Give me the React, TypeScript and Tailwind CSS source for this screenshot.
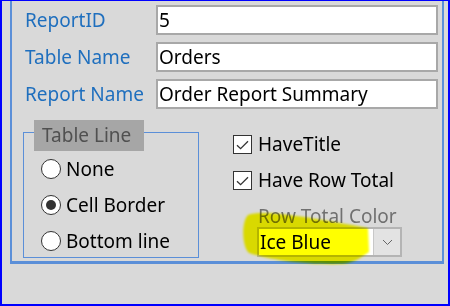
import React from 'react'

const fields = [
  { label: 'ReportID', value: '5' },
  { label: 'Table Name', value: 'Orders' },
  { label: 'Report Name', value: 'Order Report Summary' },
]

const radios = [
  { label: 'None', checked: false },
  { label: 'Cell Border', checked: true },
  { label: 'Bottom line', checked: false },
]

function Radio({ checked }: { checked: boolean }) {
  return (
    <span className="w-[20px] h-[20px] rounded-full border-[1.5px] border-[#333] bg-white flex items-center justify-center shrink-0">
      {checked && <span className="w-[10px] h-[10px] rounded-full bg-[#333]" />}
    </span>
  )
}

function Check() {
  return (
    <span className="w-[19px] h-[19px] border border-[#333] bg-white flex items-center justify-center shrink-0">
      <svg width="13" height="10" viewBox="0 0 13 10">
        <path d="M1 5.2 L4.6 8.6 L12 1.2" fill="none" stroke="#333" strokeWidth="1.3" />
      </svg>
    </span>
  )
}

export default function App() {
  return (
    <div className="relative w-[450px] h-[306px] bg-[#d9d9d9] border-l-2 border-r-2 border-t border-b-2 border-[#0000ff] font-['Noto_Sans',sans-serif] text-[19px] overflow-hidden">
      {/* inner frame */}
      <div className="ml-[8px] w-[434px] h-[263px] border-l-2 border-r-2 border-b-[3px] border-[#5b8fd8] pt-[4px]">
        <div className="flex flex-col gap-[7px]">
          {fields.map(f => (
            <div key={f.label} className="flex items-center">
              <div className="w-[144px] pl-[13px] text-[#1f6fbe] leading-none">{f.label}</div>
              <div className="w-[282px] h-[30px] border-2 border-[#a8a8a8] bg-white flex items-center pl-[1px] text-black leading-none">
                {f.value}
              </div>
            </div>
          ))}
        </div>

        <div className="flex mt-[23px]">
          {/* Table Line group */}
          <div className="relative ml-[11px] w-[176px] h-[126px] border border-[#5b8fd8] pl-[17px] pt-[26px] flex flex-col gap-[16px]">
            <div className="absolute left-[10px] -top-[13px] h-[31px] w-[110px] bg-[#a6a6a6] text-[#505050] pl-[8px] flex items-center leading-none">
              Table Line
            </div>
            {radios.map(r => (
              <div key={r.label} className="flex items-center gap-[5px] h-[20px] text-black leading-none">
                <Radio checked={r.checked} />
                <span>{r.label}</span>
              </div>
            ))}
          </div>

          {/* right column */}
          <div className="ml-[34px] pt-[3px] flex flex-col">
            <div className="flex items-center gap-[6px] h-[19px] text-black leading-none">
              <Check />
              <span>HaveTitle</span>
            </div>
            <div className="flex items-center gap-[6px] h-[19px] mt-[17px] text-black leading-none">
              <Check />
              <span>Have Row Total</span>
            </div>
            <div className="ml-[25px] mt-[15px] leading-[22px] text-[#707070]">Row Total Color</div>
            <div className="ml-[24px] w-[145px] h-[30px] border-2 border-[#b4b4b4] bg-white flex">
              <div className="flex-1 flex items-center pl-[1px] text-black leading-none">Ice Blue</div>
              <div className="w-[27px] bg-[#e3e3e3] border-l border-[#c8c8c8] flex items-center justify-center">
                <svg width="11" height="7" viewBox="0 0 11 7">
                  <path d="M1 1 L5.5 5.5 L10 1" fill="none" stroke="#666" strokeWidth="1" />
                </svg>
              </div>
            </div>
          </div>
        </div>
      </div>

      {/* highlighter stroke */}
      <svg className="absolute left-0 top-0 pointer-events-none mix-blend-multiply" width="450" height="306" viewBox="0 0 450 306">
        <defs>
          <filter id="soft" x="-10%" y="-10%" width="120%" height="120%">
            <feGaussianBlur stdDeviation="0.8" />
          </filter>
        </defs>
        <path
          d="M246,214 C262,208 310,217 366,227 L367,251 C358,257 352,262 340,263 C305,264 268,259 247,252 C240,246 239,221 246,214 Z"
          fill="#ffff00"
          filter="url(#soft)"
        />
      </svg>
    </div>
  )
}
